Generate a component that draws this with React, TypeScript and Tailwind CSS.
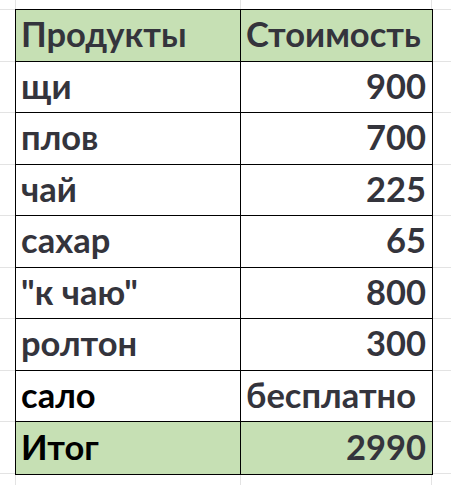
const rows: { name: string; cost: string; green?: boolean; black?: boolean; textCost?: boolean }[] = [
  { name: "Продукты", cost: "Стоимость", green: true, textCost: true },
  { name: "щи", cost: "900" },
  { name: "плов", cost: "700" },
  { name: "чай", cost: "225" },
  { name: "сахар", cost: "65" },
  { name: "\"к чаю\"", cost: "800" },
  { name: "ролтон", cost: "300" },
  { name: "сало", cost: "бесплатно", black: true, textCost: true },
  { name: "Итог", cost: "2990", green: true, black: true },
];

export default function App() {
  return (
    <div className="w-[451px] h-[485px] overflow-hidden bg-white font-['Lato',sans-serif] font-bold text-[34.5px] text-[#34343c]">
      {/* top spacer with faint grid */}
      <div className="flex h-[9px]">
        <div className="w-[16px] border-r border-[#e3e3e3]" />
        <div className="w-[225px] border-r border-[#e3e3e3]" />
        <div className="w-[191px] border-r border-[#e3e3e3]" />
        <div className="flex-1" />
      </div>
      <div className="flex">
        <div className="w-[15px] flex flex-col border-t border-[#e3e3e3]">
          {rows.map((r, i) => (
            <div key={i} className="h-[51.5px] border-b border-[#e3e3e3]" />
          ))}
        </div>
        <div className="w-[418px] border border-black flex flex-col">
          {rows.map((r, i) => (
            <div
              key={i}
              className={`flex h-[51.5px] ${i < rows.length - 1 ? "border-b border-black" : ""} ${r.green ? "bg-[#c6e0b4]" : ""}`}
            >
              <div className={`w-[225px] border-r border-black flex items-end pl-[5px] pb-[9px] leading-none whitespace-nowrap ${r.black ? "text-black" : ""}`}>
                {r.name}
              </div>
              <div className={`flex-1 flex items-end pb-[9px] leading-none whitespace-nowrap ${r.textCost ? "justify-start pl-[5px]" : "justify-end pr-[6px]"}`}>
                {r.cost}
              </div>
            </div>
          ))}
        </div>
        <div className="flex-1 flex flex-col border-t border-[#e3e3e3]">
          {rows.map((r, i) => (
            <div key={i} className="h-[51.5px] border-b border-[#e3e3e3]" />
          ))}
        </div>
      </div>
      <div className="flex h-[20px]">
        <div className="w-[16px] border-r border-[#e3e3e3]" />
        <div className="w-[225px] border-r border-[#e3e3e3]" />
        <div className="w-[191px] border-r border-[#e3e3e3]" />
        <div className="flex-1" />
      </div>
    </div>
  );
}
